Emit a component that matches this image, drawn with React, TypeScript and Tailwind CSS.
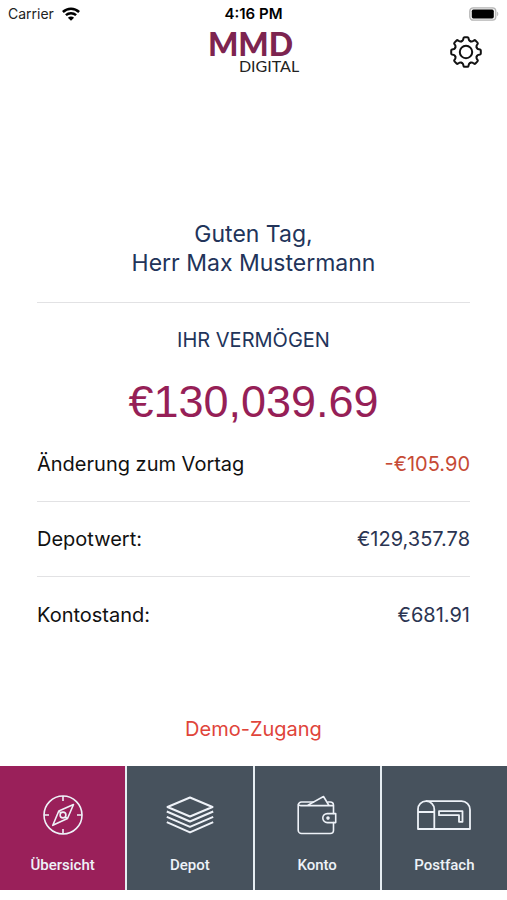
import type { ReactNode } from 'react';

const COG_STEPS = [0, 45, 90, 135, 180, 225, 270, 315];

function WifiIcon() {
  return (
    <svg viewBox="0 0 18 14" className="h-[14px] w-[18px]" fill="none" stroke="black" strokeWidth="2.5" aria-hidden="true">
      <path d="M.9 5C5.5.6 12.5.6 17.1 5" />
      <path d="M3.9 8.2c2.9-2.7 7.3-2.7 10.2 0" />
      <path d="M9 13.8 5.9 10.7c1.8-1.6 4.4-1.6 6.2 0z" fill="black" stroke="none" />
    </svg>
  );
}

function BatteryIcon() {
  return (
    <svg viewBox="0 0 30 14" className="h-[14px] w-[30px]" aria-hidden="true">
      <rect x=".8" y=".8" width="26" height="12.4" rx="3.4" fill="#f2f2f2" stroke="#b4b4b4" strokeWidth="1.3" />
      <rect x="2.8" y="2.6" width="22" height="8.8" rx="1.6" fill="black" />
      <path d="M28.2 4.8c1.4.4 1.4 4 0 4.4z" fill="#b4b4b4" />
    </svg>
  );
}

function CogIcon() {
  return (
    <svg viewBox="-17 -17 34 34" className="h-[34px] w-[34px]" fill="none" stroke="#111" strokeWidth="2" strokeLinecap="round" strokeLinejoin="round" aria-hidden="true">
      {COG_STEPS.map((deg) => (
        <path
          key={deg}
          transform={`rotate(${deg})`}
          d="M-4.4-10.7C-3.4-11.1-2.8-11.8-2.7-12.8L-2.5-14Q-2.3-14.8-1.5-14.8H1.5Q2.3-14.8 2.5-14L2.7-12.8C2.8-11.8 3.4-11.1 4.4-10.7"
        />
      ))}
      <circle r="6.2" />
    </svg>
  );
}

function CompassIcon() {
  return (
    <svg viewBox="0 0 40 40" className="h-10 w-10" fill="none" stroke="currentColor" strokeWidth="1.6" strokeLinejoin="round" aria-hidden="true">
      <circle cx="20" cy="20" r="19" />
      <path d="M20 1v5M20 34v5M1 20h5M34 20h5" />
      <path d="M30.5 9.5 24.5 23.5 9.8 30.3 15.8 16z" />
      <circle cx="20" cy="20" r="2.9" />
      <path d="m15.8 16 2.2 2M24.5 23.5 22 22" />
    </svg>
  );
}

function LayersIcon() {
  return (
    <svg viewBox="0 0 48 38" className="h-[38px] w-12" fill="none" stroke="currentColor" strokeWidth="2" strokeLinejoin="round" aria-hidden="true">
      <path d="M24 1.5 46.5 11 24 20.5 1.5 11z" />
      <path d="M.8 15.5 24 25.5l23.2-10M.8 20.8 24 30.8l23.2-10M.8 26.1 24 36.4l23.2-10.3" />
    </svg>
  );
}

function WalletIcon() {
  return (
    <svg viewBox="0 0 40 40" className="h-10 w-10" fill="none" stroke="currentColor" strokeWidth="1.6" strokeLinejoin="round" strokeLinecap="round" aria-hidden="true">
      <path d="M36.5 27.5v7.7a3.3 3.3 0 0 1-3.3 3.3H4.5a3.3 3.3 0 0 1-3.3-3.3V10.3A3.3 3.3 0 0 1 4.5 7h12M31 7h2.2a3.3 3.3 0 0 1 3.3 3.3v8.2" />
      <path d="M1.5 9.5c.4.8 1.2 1.1 2.4 1.1h32.4M10.5 10.4 26.5 1.5l5.5 9" />
      <path d="M38.7 18.6h-8.4a4.5 4.5 0 0 0 0 9h8.4z" />
      <circle cx="31" cy="23.1" r="1" fill="currentColor" />
    </svg>
  );
}

function MailboxIcon() {
  return (
    <svg viewBox="0 0 54 30" className="h-[30px] w-[54px]" fill="none" stroke="currentColor" strokeWidth="1.8" strokeLinejoin="round" aria-hidden="true">
      <path d="M1 29V9.5a8 8 0 0 1 8-8.3h35.5a8.5 8.5 0 0 1 8.5 8.5V29z" />
      <path d="M9 1.2a8 8 0 0 1 8.3 8.3V29M1 12h16.3" />
      <path d="M22 11.2h23.5v10.6H42v-6.6H22z" />
    </svg>
  );
}

type Tab = { label: string; icon: ReactNode; active?: boolean };

const tabs: Tab[] = [
  { label: 'Übersicht', icon: <CompassIcon />, active: true },
  { label: 'Depot', icon: <LayersIcon /> },
  { label: 'Konto', icon: <WalletIcon /> },
  { label: 'Postfach', icon: <MailboxIcon /> },
];

const rows = [
  { label: 'Änderung zum Vortag', value: '-€105.90', color: 'text-[#c64a35]' },
  { label: 'Depotwert:', value: '€129,357.78', color: 'text-[#2b3552]' },
  { label: 'Kontostand:', value: '€681.91', color: 'text-[#2b3552]' },
];

export default function App() {
  return (
    <div className="flex min-h-screen flex-col bg-white pb-[10px] font-['Inter',sans-serif]">
      {/* Status bar */}
      <div className="grid h-7 grid-cols-3 items-center px-2 text-sm text-[#222]">
        <div className="flex items-center gap-2">
          <span>Carrier</span>
          <WifiIcon />
        </div>
        <span className="text-center text-[15px] font-semibold text-black">4:16 PM</span>
        <div className="flex justify-end">
          <BatteryIcon />
        </div>
      </div>

      <header className="grid h-12 grid-cols-3 items-center px-6">
        <div className="col-start-2 flex justify-center">
          <div className="flex flex-col items-end font-['Lato',sans-serif]">
            <span className="pr-[6px] text-[32px] leading-7 font-black text-[#7d2450]">MMD</span>
            <span className="text-base leading-4 text-[#222]">DIGITAL</span>
          </div>
        </div>
        <button type="button" aria-label="Einstellungen" className="justify-self-end">
          <CogIcon />
        </button>
      </header>

      <main className="mt-36 flex grow flex-col px-[37px]">
        <h1 className="border-b border-[#e2e2e4] pb-6 text-center text-[23px] leading-[29px] text-[#22345a]">
          Guten Tag,
          <br />
          Herr Max Mustermann
        </h1>

        <h2 className="pt-[23px] text-center text-xl leading-7 text-[#22345a]">IHR VERMÖGEN</h2>
        <p className="mt-[23px] text-center font-['Liberation_Sans',sans-serif] text-[45px] leading-[50px] text-[#961f57]">
          €130,039.69
        </p>

        <dl className="divide-y divide-[#e2e2e4] text-xl">
          {rows.map((row) => (
            <div key={row.label} className="flex h-[75px] items-center justify-between">
              <dt className="text-[#111]">{row.label}</dt>
              <dd className={row.color}>{row.value}</dd>
            </div>
          ))}
        </dl>

        <p className="mt-auto pb-[23px] text-center text-xl leading-7 text-[#e0443a]">Demo-Zugang</p>
      </main>

      {/* Bottom navigation */}
      <nav className="grid grid-cols-4 gap-[2px] bg-[#e6edf2] font-['Roboto',sans-serif]">
        {tabs.map((tab) => (
          <button
            key={tab.label}
            type="button"
            aria-current={tab.active ? 'page' : undefined}
            className={`flex h-[124px] flex-col items-center pt-[29px] text-[#eef2f8] ${
              tab.active ? 'bg-[#9a205a]' : 'bg-[#47525d]'
            }`}
          >
            <span className="flex h-10 items-center">{tab.icon}</span>
            <span className="mt-5 text-[15px] leading-5 font-medium">{tab.label}</span>
          </button>
        ))}
      </nav>
    </div>
  );
}
